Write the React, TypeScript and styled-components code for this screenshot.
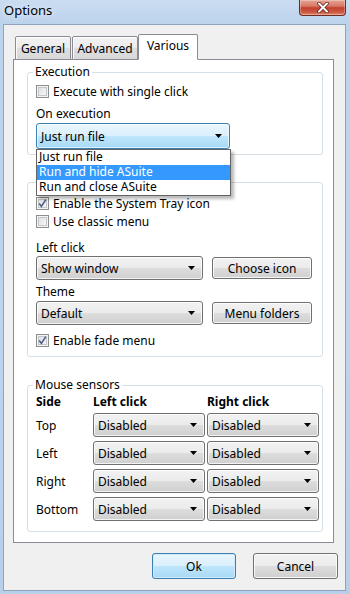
import React from 'react'
import styled, { createGlobalStyle, css } from 'styled-components'

const GlobalStyle = createGlobalStyle`
  html, body {
    margin: 0;
    padding: 0;
    background: #b9d1ea;
  }
  body {
    font-family: "Noto Sans", "Open Sans", sans-serif;
    font-size: 12px;
    color: #000;
  }
  * {
    box-sizing: border-box;
  }
`

const Window = styled.div`
  width: 350px;
  height: 594px;
  display: flex;
  flex-direction: column;
  padding: 0 4px 3px 3px;
  background: linear-gradient(180deg, #cadcf0 0px, #bcd3ec 24px, #bdd4ed 320px, #b7cfe9 100%);
`

const TitleBar = styled.div`
  height: 24px;
  flex: none;
  display: flex;
  align-items: flex-start;
  justify-content: space-between;
`

const Title = styled.span`
  margin-left: 1px;
  font-size: 13px;
  line-height: 21px;
  color: #000;
  text-shadow: 0 0 6px rgba(255, 255, 255, 0.9);
`

const CloseButton = styled.div`
  width: 47px;
  height: 16px;
  display: flex;
  align-items: center;
  justify-content: center;
  border: 1px solid #6f2a22;
  border-top: none;
  border-radius: 0 0 4px 4px;
  background: linear-gradient(180deg, #e5a393 0%, #d97a68 40%, #c2412f 52%, #cc5740 80%, #dd8a6c 100%);
  box-shadow: inset 0 0 0 1px rgba(255, 255, 255, 0.3);
`

const Client = styled.div`
  flex: 1;
  min-height: 0;
  display: flex;
  flex-direction: column;
  padding: 9px 11px 11px 9px;
  border: 1px solid #8fa3bb;
  background: #f0f0f0;
`

const TabStrip = styled.div`
  position: relative;
  z-index: 1;
  flex: none;
  height: 26px;
  display: flex;
  align-items: flex-end;
  gap: 1px;
  padding-left: 2px;
  margin-bottom: -1px;
`

const Tab = styled.div<{ $w: number; $active?: boolean }>`
  width: ${(p) => p.$w}px;
  height: 24px;
  display: flex;
  align-items: center;
  justify-content: center;
  padding-top: 1px;
  border: 1px solid #898c95;
  border-radius: 2px 2px 0 0;
  background: linear-gradient(180deg, #f3f3f3 0%, #ebebeb 50%, #dedede 51%, #d8d8d8 100%);
  box-shadow: inset 0 1px 0 #fff, inset 1px 0 0 #fbfbfb;
  ${(p) =>
    p.$active &&
    css`
      height: 26px;
      margin-left: -1px;
      padding-top: 0;
      padding-bottom: 3px;
      border-bottom-color: #fff;
      background: #fff;
      box-shadow: none;
    `}
`

const Panel = styled.div`
  height: 484px;
  flex: none;
  display: flex;
  flex-direction: column;
  padding: 0 10px 0 13px;
  border: 1px solid #898c95;
  background: #fff;
`

const Group = styled.fieldset<{ $top: number; $bottom: number }>`
  flex: none;
  margin: ${(p) => p.$top}px 0 0 0;
  padding: 0 8px ${(p) => p.$bottom}px 8px;
  min-width: 0;
  border: 1px solid #d5dfe5;
  border-radius: 3px;
  display: flex;
  flex-direction: column;
  align-items: flex-start;
`

const Legend = styled.legend`
  margin-left: -3px;
  padding: 0 2px;
  line-height: 14px;
  color: #000;
`

const CheckRow = styled.div<{ $top: number }>`
  height: 15px;
  margin-top: ${(p) => p.$top}px;
  display: flex;
  align-items: center;
  gap: 4px;
  line-height: 15px;
  white-space: nowrap;
`

const Box = styled.span`
  position: relative;
  width: 13px;
  height: 13px;
  flex: none;
  display: flex;
  align-items: center;
  justify-content: center;
  border: 1px solid #8e8f8f;
  background: linear-gradient(135deg, #d9dadb 0%, #eeeeee 55%, #fbfbfb 100%);
  box-shadow: inset 0 0 0 1px #f4f4f4, inset 0 0 0 2px #c3c6ca;
`

const Caption = styled.div<{ $top: number }>`
  height: 15px;
  margin-top: ${(p) => p.$top}px;
  line-height: 15px;
  white-space: nowrap;
`

const ControlRow = styled.div<{ $top: number }>`
  height: 24px;
  margin-top: ${(p) => p.$top}px;
  display: flex;
  align-items: center;
  gap: 9px;
`

const ComboWrap = styled.div`
  position: relative;
  margin-top: 2px;
`

const Combo = styled.div<{ $w: number; $h: number; $focused?: boolean }>`
  width: ${(p) => p.$w}px;
  height: ${(p) => p.$h}px;
  display: flex;
  align-items: center;
  justify-content: space-between;
  padding: 0 7px 0 4px;
  border: 1px solid #707070;
  border-radius: 3px;
  background: linear-gradient(180deg, #f2f2f2 0%, #ebebeb 50%, #dddddd 51%, #cfcfcf 100%);
  box-shadow: inset 0 0 0 1px rgba(255, 255, 255, 0.75);
  line-height: 15px;
  white-space: nowrap;
  ${(p) =>
    p.$focused &&
    css`
      border-color: #3c7fb1;
      background: linear-gradient(180deg, #eaf6fd 0%, #d9f0fc 50%, #bee6fd 51%, #a7d9f5 100%);
      box-shadow: inset 0 0 0 1px rgba(255, 255, 255, 0.6);
    `}
`

const DropList = styled.div`
  position: absolute;
  top: 100%;
  left: 0;
  z-index: 5;
  width: 195px;
  border: 1px solid #646464;
  background: #fff;
  box-shadow: 3px 3px 3px rgba(0, 0, 0, 0.28);
`

const DropItem = styled.div<{ $selected?: boolean }>`
  height: 15px;
  padding-left: 2px;
  line-height: 14px;
  white-space: nowrap;
  ${(p) =>
    p.$selected &&
    css`
      background: #3399ff;
      color: #fff;
    `}
`

const PushButton = styled.div<{ $w: number; $h: number; $default?: boolean }>`
  width: ${(p) => p.$w}px;
  height: ${(p) => p.$h}px;
  display: flex;
  align-items: center;
  justify-content: center;
  border: 1px solid #707070;
  border-radius: 3px;
  background: linear-gradient(180deg, #f2f2f2 0%, #ebebeb 50%, #dddddd 51%, #cfcfcf 100%);
  box-shadow: inset 0 0 0 1px rgba(255, 255, 255, 0.8);
  line-height: 15px;
  white-space: nowrap;
  ${(p) =>
    p.$default &&
    css`
      border-color: #3c7fb1;
      background: linear-gradient(180deg, #eaf6fd 0%, #d9f0fc 50%, #bee6fd 51%, #a7d9f5 100%);
      box-shadow: inset 0 0 0 1px #cdebfb;
    `}
`

const SensorGrid = styled.div`
  margin-top: 3px;
  display: grid;
  grid-template-columns: 55px 112px 112px;
  grid-template-rows: 14px;
  grid-auto-rows: 24px;
  column-gap: 2px;
  row-gap: 4px;
  align-items: center;
`

const HeadCell = styled.div`
  font-weight: bold;
  line-height: 14px;
  white-space: nowrap;
`

const SideCell = styled.div`
  line-height: 15px;
  white-space: nowrap;
`

const ButtonBar = styled.div`
  flex: none;
  margin-top: 10px;
  margin-right: -4px;
  display: flex;
  justify-content: flex-end;
  gap: 17px;
`

const Arrow = () => (
  <svg width="7" height="4" viewBox="0 0 7 4">
    <path d="M0 0H7L3.5 4Z" fill="#000" />
  </svg>
)

const CheckMark = () => (
  <svg width="11" height="11" viewBox="0 0 11 11" style={{ position: 'absolute' }}>
    <path d="M2.2 5.6L4.4 8.4L8.8 1.6" fill="none" stroke="#4b5f86" strokeWidth="1.6" />
  </svg>
)

const Check: React.FC<{ checked?: boolean; label: string; top: number }> = ({ checked, label, top }) => (
  <CheckRow $top={top}>
    <Box>{checked && <CheckMark />}</Box>
    <span>{label}</span>
  </CheckRow>
)

const Select: React.FC<{ value: string; w: number; h: number; focused?: boolean }> = ({ value, w, h, focused }) => (
  <Combo $w={w} $h={h} $focused={focused}>
    <span>{value}</span>
    <Arrow />
  </Combo>
)

const sides = ['Top', 'Left', 'Right', 'Bottom']

export default function App() {
  return (
    <>
      <GlobalStyle />
      <Window>
        <TitleBar>
          <Title>Options</Title>
          <CloseButton>
            <svg width="14" height="11" viewBox="0 0 14 11">
              <path d="M3 1.5L11 9.5M11 1.5L3 9.5" stroke="#5a1a14" strokeWidth="3.4" strokeLinecap="round" />
              <path d="M3 1.5L11 9.5M11 1.5L3 9.5" stroke="#fff" strokeWidth="2" strokeLinecap="round" />
            </svg>
          </CloseButton>
        </TitleBar>
        <Client>
          <TabStrip>
            <Tab $w={56}>General</Tab>
            <Tab $w={66}>Advanced</Tab>
            <Tab $w={60} $active>
              Various
            </Tab>
          </TabStrip>
          <Panel>
            <Group $top={5} $bottom={5}>
              <Legend>Execution</Legend>
              <Check label="Execute with single click" top={5} />
              <Caption $top={7}>On execution</Caption>
              <ComboWrap>
                <Select value="Just run file" w={194} h={26} focused />
                <DropList>
                  <DropItem>Just run file</DropItem>
                  <DropItem $selected>Run and hide ASuite</DropItem>
                  <DropItem>Run and close ASuite</DropItem>
                </DropList>
              </ComboWrap>
            </Group>

            <Group $top={27} $bottom={8}>
              <Check checked label="Enable the System Tray icon" top={13} />
              <Check label="Use classic menu" top={3} />
              <Caption $top={11}>Left click</Caption>
              <ControlRow $top={1}>
                <Select value="Show window" w={167} h={24} />
                <PushButton $w={100} $h={22}>Choose icon</PushButton>
              </ControlRow>
              <Caption $top={4}>Theme</Caption>
              <ControlRow $top={2}>
                <Select value="Default" w={167} h={24} />
                <PushButton $w={100} $h={22}>Menu folders</PushButton>
              </ControlRow>
              <Check checked label="Enable fade menu" top={8} />
            </Group>

            <Group $top={21} $bottom={10}>
              <Legend>Mouse sensors</Legend>
              <SensorGrid>
                <HeadCell>Side</HeadCell>
                <HeadCell>Left click</HeadCell>
                <HeadCell>Right click</HeadCell>
                {sides.map((side) => (
                  <React.Fragment key={side}>
                    <SideCell>{side}</SideCell>
                    <Select value="Disabled" w={112} h={24} />
                    <Select value="Disabled" w={112} h={24} />
                  </React.Fragment>
                ))}
              </SensorGrid>
            </Group>
          </Panel>
          <ButtonBar>
            <PushButton $w={84} $h={26} $default>
              Ok
            </PushButton>
            <PushButton $w={85} $h={26}>Cancel</PushButton>
          </ButtonBar>
        </Client>
      </Window>
    </>
  )
}
